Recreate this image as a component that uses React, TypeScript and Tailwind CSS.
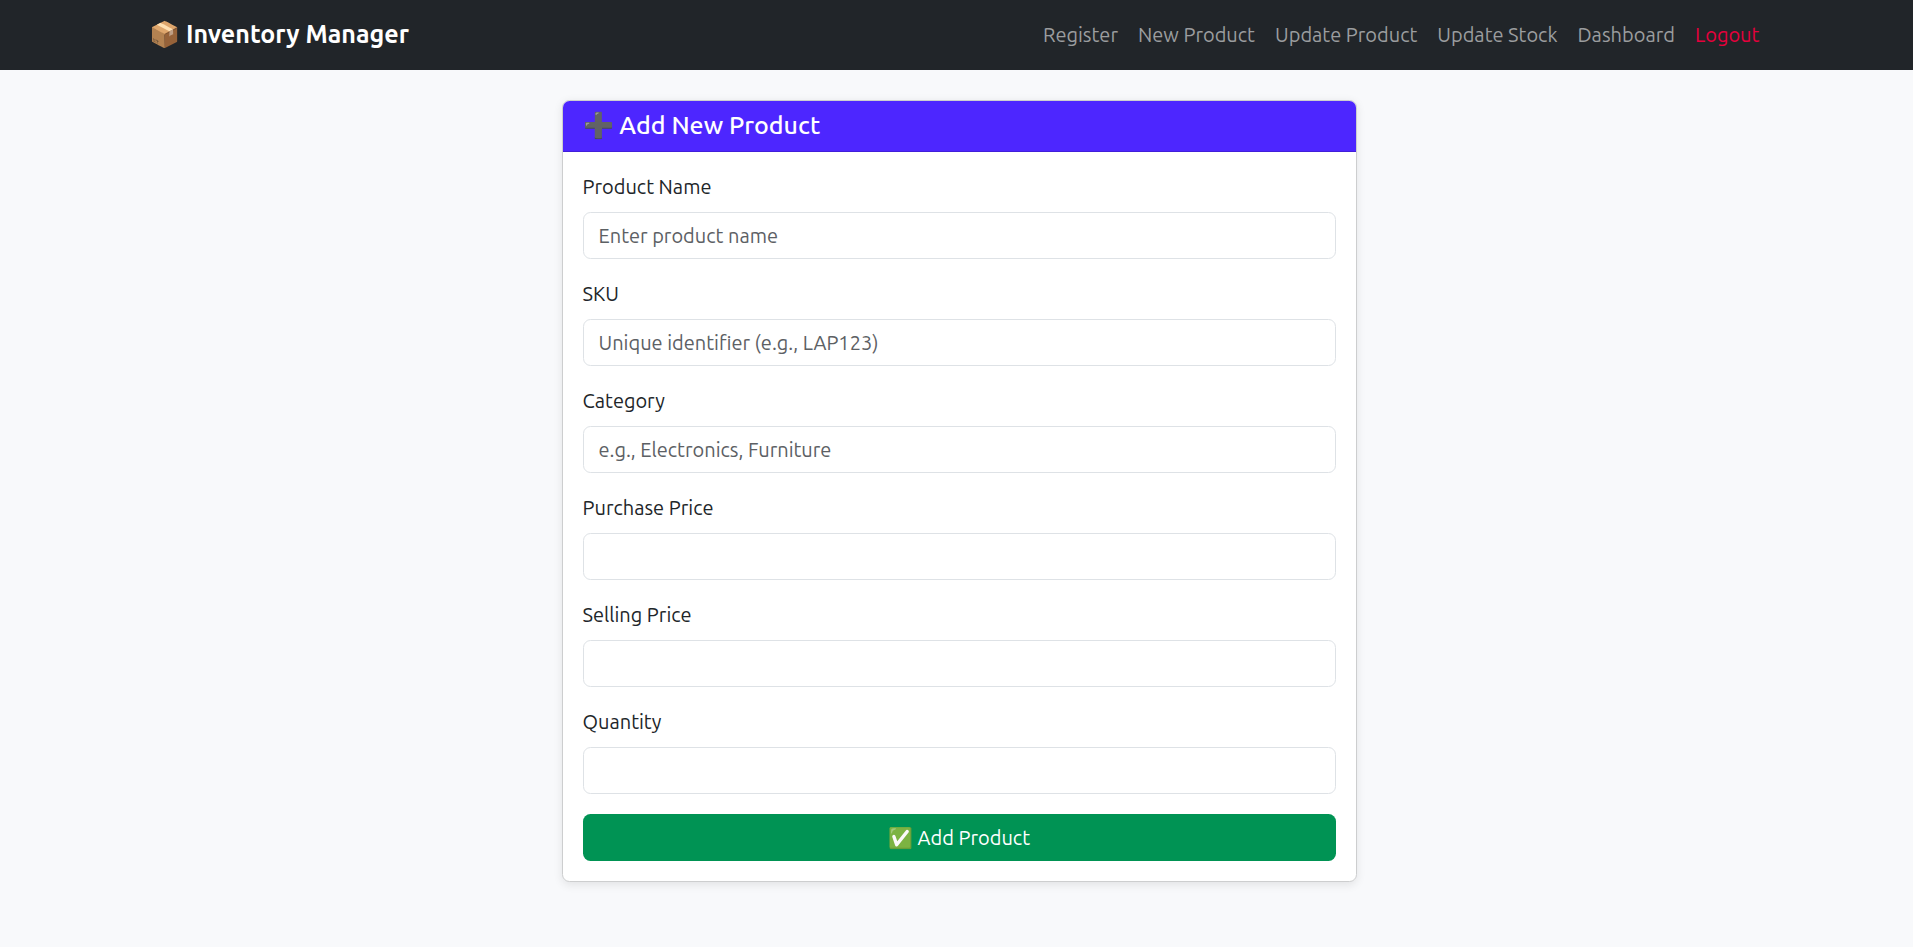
import React from "react";

const navLinks = [
  { label: "Register", width: "w-[75px]" },
  { label: "New Product", width: "w-[117px]" },
  { label: "Update Product", width: "w-[142.3px]" },
  { label: "Update Stock", width: "w-[120.2px]" },
  { label: "Dashboard", width: "w-[97.5px]" },
];

const fields = [
  { id: "name", label: "Product Name", placeholder: "Enter product name" },
  { id: "sku", label: "SKU", placeholder: "Unique identifier (e.g., LAP123)" },
  { id: "category", label: "Category", placeholder: "e.g., Electronics, Furniture" },
  { id: "purchase", label: "Purchase Price", placeholder: "" },
  { id: "selling", label: "Selling Price", placeholder: "" },
  { id: "quantity", label: "Quantity", placeholder: "" },
];

function NavBar() {
  return (
    <nav className="flex h-[70px] items-center justify-between bg-[#212529] pl-[149px] pr-[153px] leading-[30px]">
      <a className="pb-0.5 text-[25px] font-semibold whitespace-pre text-white">
        📦 Inventory Manager
      </a>
      <div className="flex gap-5 whitespace-nowrap text-[#9b9d9f]">
        {navLinks.map((link) => (
          <a key={link.label} className={link.width}>
            {link.label}
          </a>
        ))}
        <a className="w-[65px] text-[#e6003c]">Logout</a>
      </div>
    </nav>
  );
}

function ProductForm() {
  return (
    <div className="ml-[562px] w-[795px] rounded-[7.5px] border border-[#cdcecf] bg-white shadow-[0_2.5px_10px_rgba(0,0,0,0.09)]">
      <div className="h-[51px] rounded-t-[6.5px] border-b border-[#411fd9] bg-[#4d26ff] px-[19.5px] text-[25px] leading-[48px] font-medium text-white">
        ➕ Add New Product
      </div>
      <form className="p-5">
        {fields.map((field) => (
          <div key={field.id} className="mb-5">
            <label htmlFor={field.id} className="-ml-[0.5px] mb-2.5 block h-[30px] leading-[30px]">
              {field.label}
            </label>
            <input
              id={field.id}
              placeholder={field.placeholder}
              className="block h-[47px] w-full rounded-[7.5px] border border-[#dee2e6] bg-white px-[14.5px] placeholder:text-[#5c6064]"
            />
          </div>
        ))}
        <button
          type="button"
          className="block h-[47px] w-full rounded-[7.5px] bg-[#009354] pr-px leading-[47px] text-white"
        >
          ✅ Add Product
        </button>
      </form>
    </div>
  );
}

export default function App() {
  return (
    <div className="min-h-screen bg-[#f8f9fb] font-['Ubuntu','Open_Sans',sans-serif] text-xl text-[#212529]">
      <NavBar />
      <main className="pt-[30px]">
        <ProductForm />
      </main>
    </div>
  );
}
